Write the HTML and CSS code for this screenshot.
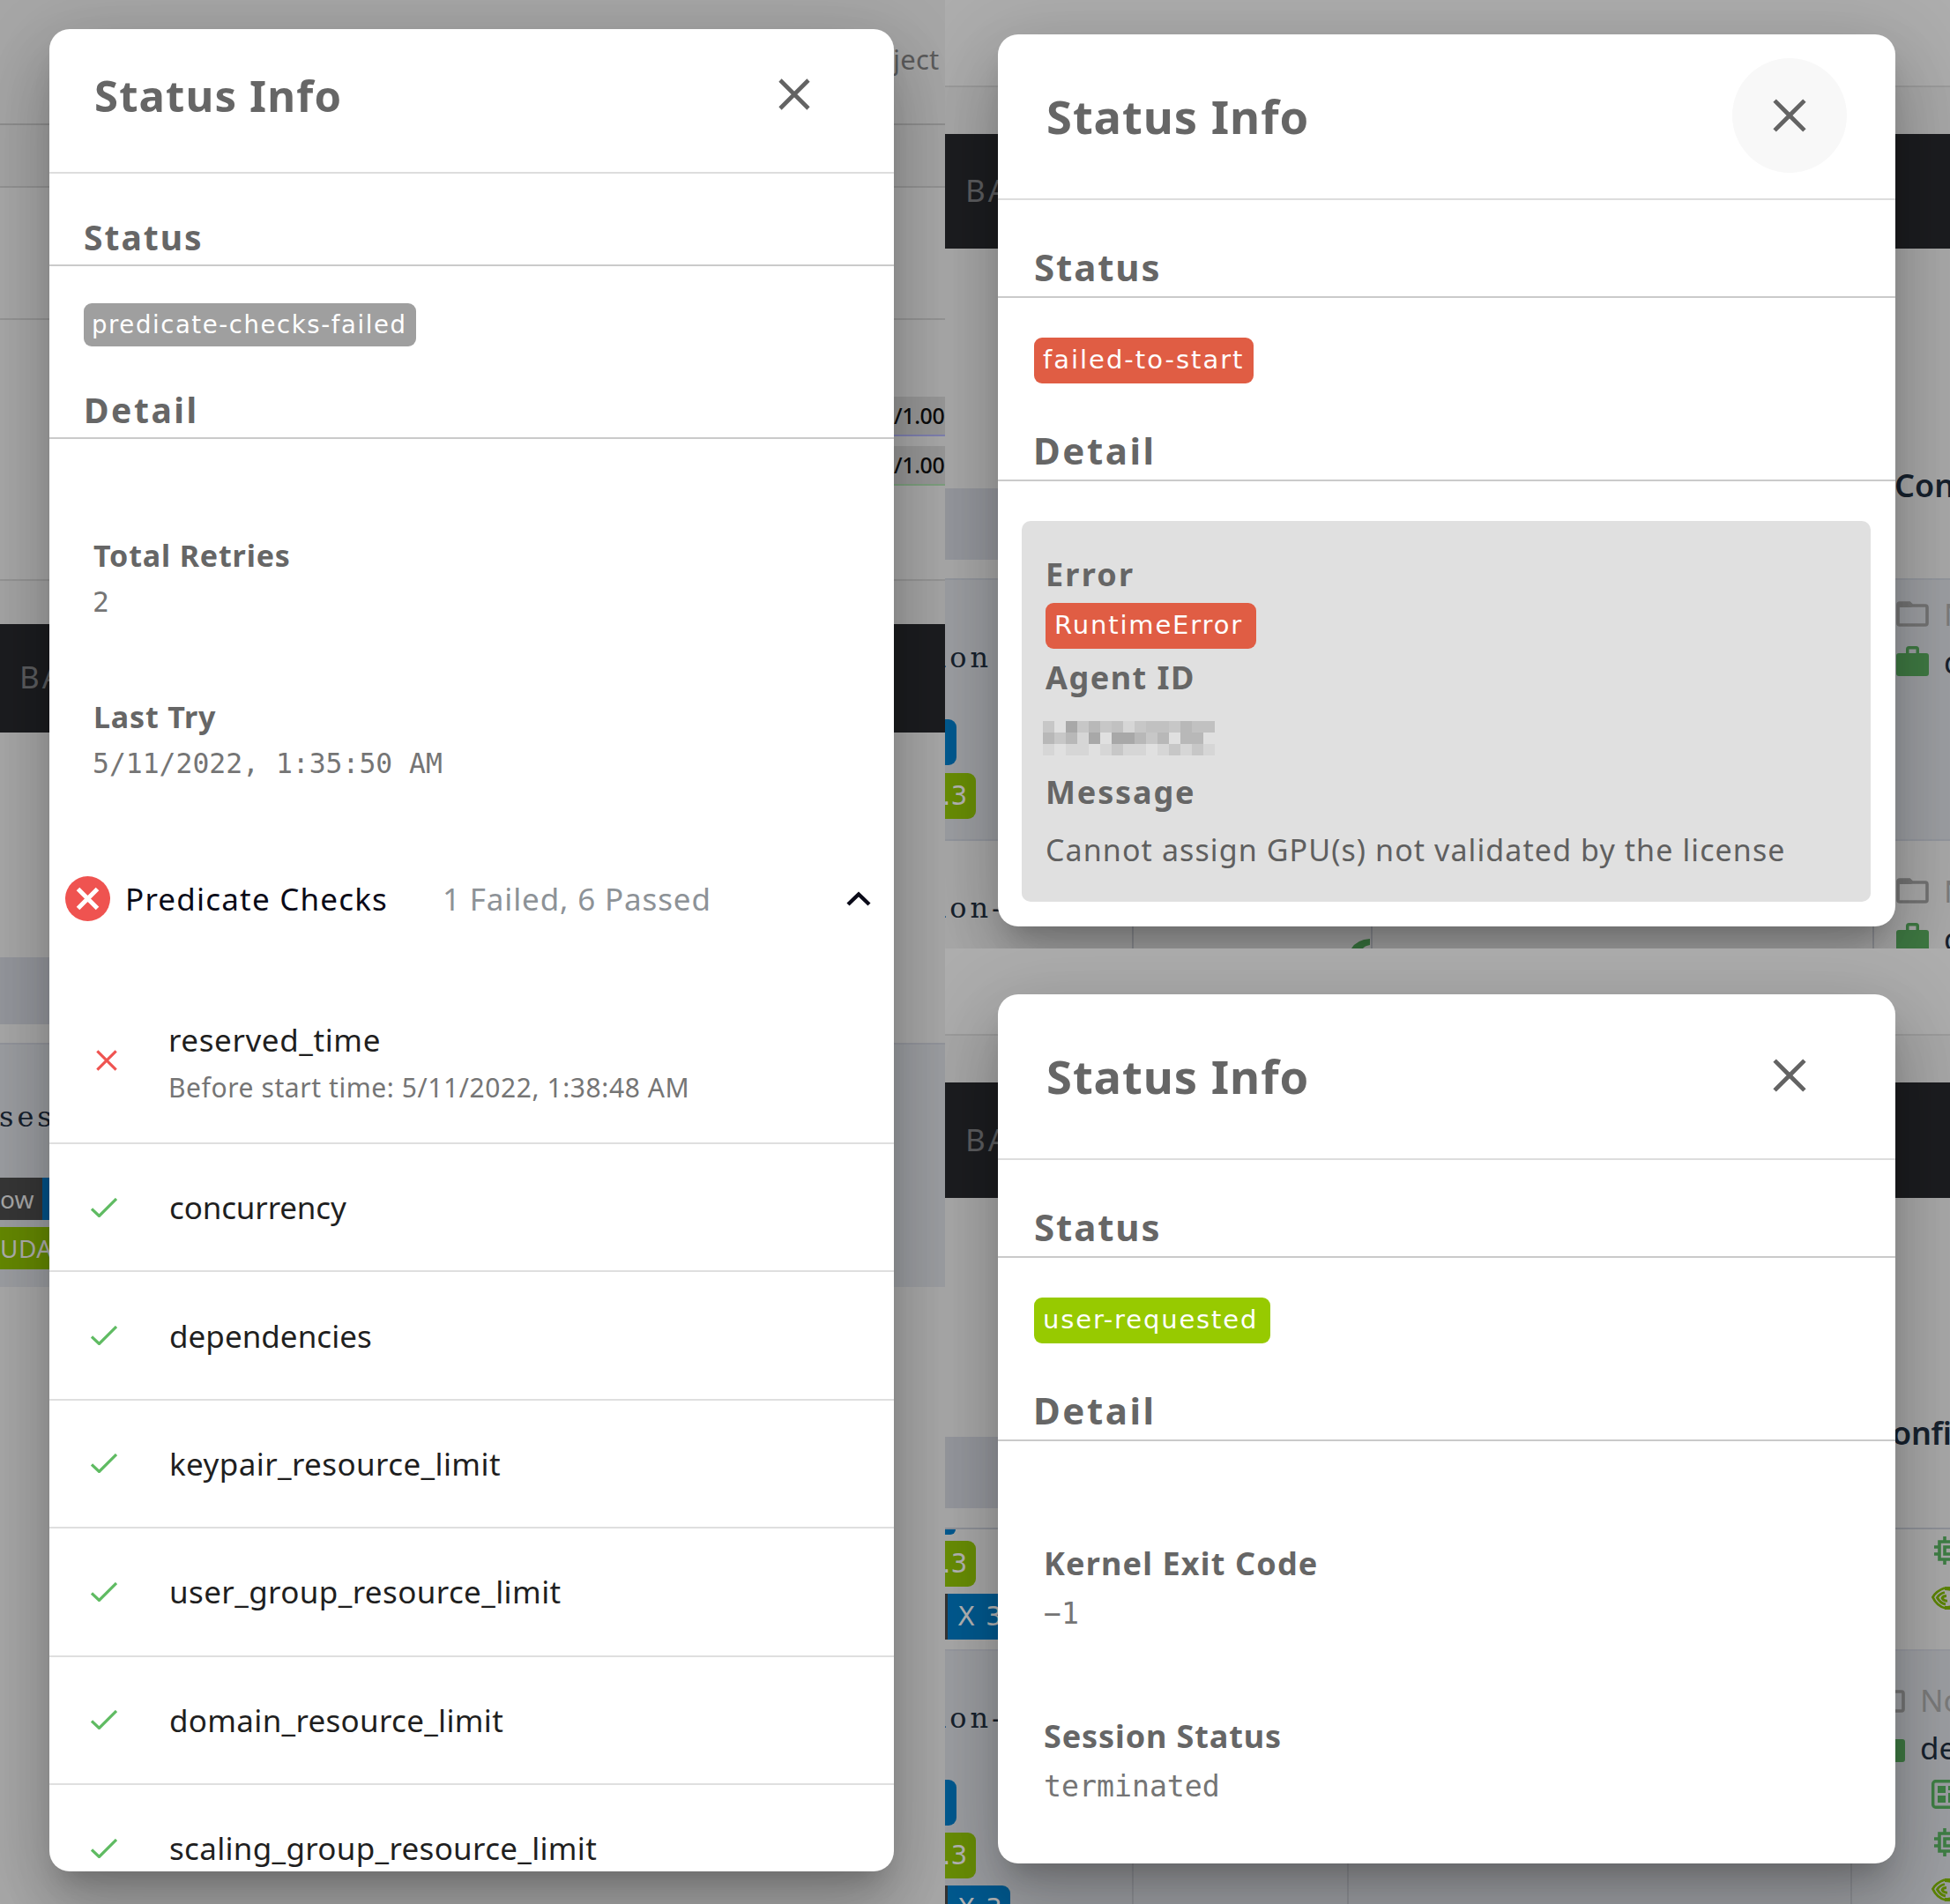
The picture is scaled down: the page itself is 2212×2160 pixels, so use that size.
FILE: index.html
```html
<!DOCTYPE html>
<html lang="en">
<head>
<meta charset="utf-8">
<title>Status Info</title>
<link rel="stylesheet" href="styles.css">
</head>
<body>
<svg class="defs" aria-hidden="true">
  <symbol id="close" viewBox="0 0 36 36"><path d="M2 2 34 34M34 2 2 34" fill="none" stroke="currentColor" stroke-width="4.6"/></symbol>
  <symbol id="check" viewBox="0 0 30 22"><path d="M1 12.500 9.500 20.500 29 1" fill="none" stroke="currentColor" stroke-width="3.200"/></symbol>
  <symbol id="folder" viewBox="0 0 37 29"><path d="M2 4V25q0 2 2 2H33q2 0 2-2V7q0-2-2-2H18L15 2H4Q2 2 2 4Z" fill="none" stroke="currentColor" stroke-width="3.600"/><path d="M1 3h13l4 4H1z" fill="currentColor"/></symbol>
  <symbol id="case" viewBox="0 0 37 34"><path fill-rule="evenodd" d="M11 8V3.500Q11 0 14.500 0H22.500Q26 0 26 3.500V8H34Q37 8 37 11V31Q37 34 34 34H3Q0 34 0 31V11Q0 8 3 8ZM14.500 8H22.500V3.500H14.500Z" fill="currentColor"/></symbol>
  <symbol id="chip" viewBox="0 0 32 32"><path d="M6 6H26V26H6ZM12 12H20V20H12ZM12 0V6M20 0V6M12 26V32M20 26V32M0 12H6M0 20H6M26 12H32M26 20H32" fill="none" stroke="currentColor" stroke-width="3.600"/></symbol>
  <symbol id="board" viewBox="0 0 36 33"><rect x="1.700" y="1.700" width="32.600" height="29.600" rx="3" fill="none" stroke="currentColor" stroke-width="3.400"/><path d="M7 7h9v8H7zM7 18h9v8H7zM19 7h9v5h-9zM19 15h9v11h-9z" fill="currentColor"/></symbol>
  <symbol id="eye" viewBox="0 0 40 26"><path d="M15 1.500Q5 5 1.500 12 6 22 16 24.500M15 6.500Q9 8 6.500 12.500 10 19 16 20M17 10.500Q13 10.500 12 13 14 16.500 18 16" fill="none" stroke="currentColor" stroke-width="2.800"/><path d="M15 0H40V26H15V22Q28 22 32 13 27 4 15 4Z" fill="currentColor"/></symbol>
</svg>

<main class="board">
  <section class="pane pane-tall">
    <div class="bands">
      <div class="band t1"></div><div class="band t2"></div><div class="band t3"></div><div class="band t4"></div>
      <div class="band t5"></div><div class="band bar t6"></div><div class="band t7"></div><div class="band t8"></div><div class="band t9"></div><div class="band t10"></div>
    </div>
    <div class="rail rail-l">
      <span class="brand brand-t">BA</span>
      <div class="head-cell head-t"></div>
      <span class="sess sess-t">ses</span>
      <div class="tag-row"><span class="tag-dark">ow</span><span class="tag-blue"></span></div>
      <span class="tag-uda">UDA</span>
    </div>
    <div class="rail rail-r">
      <span class="proj">ject</span>
      <span class="usage">/1.00</span>
      <span class="usage usage-b">/1.00</span>
    </div>

    <article class="modal modal-t">
      <header class="head">
        <h1 class="title">Status Info</h1>
        <svg class="x"><use href="#close"/></svg>
      </header>
      <h2 class="sub">Status</h2>
      <span class="badge gray">predicate-checks-failed</span>
      <h2 class="sub"><span class="det">Detail</span></h2>
      <div class="facts">
        <h3 class="label">Total Retries</h3>
        <p class="mono">2</p>
        <h3 class="label next">Last Try</h3>
        <p class="mono">5/11/2022, 1:35:50 AM</p>
      </div>
      <div class="checks">
        <svg class="fail" viewBox="0 0 51 51"><circle cx="25.500" cy="25.500" r="25.500" fill="#ef5350"/><path d="M14.500 14.500 36.500 36.500M36.500 14.500 14.500 36.500" stroke="#fff" stroke-width="5"/></svg>
        <span class="checks-name">Predicate Checks</span>
        <span class="checks-sum">1 Failed, 6 Passed</span>
        <svg class="chev" viewBox="0 0 28 17"><path d="M2 15 14 3.500 26 15" fill="none" stroke="#0a0a18" stroke-width="4.400"/></svg>
      </div>
      <ul class="list">
        <li class="item first"><svg class="bad"><use href="#close"/></svg><div><p class="name n1">reserved_time</p><p class="note">Before start time: 5/11/2022, 1:38:48 AM</p></div></li>
        <li class="item"><svg class="ok"><use href="#check"/></svg><p class="name n2">concurrency</p></li>
        <li class="item"><svg class="ok"><use href="#check"/></svg><p class="name n3">dependencies</p></li>
        <li class="item"><svg class="ok"><use href="#check"/></svg><p class="name">keypair_resource_limit</p></li>
        <li class="item"><svg class="ok"><use href="#check"/></svg><p class="name">user_group_resource_limit</p></li>
        <li class="item"><svg class="ok"><use href="#check"/></svg><p class="name n4">domain_resource_limit</p></li>
        <li class="item"><svg class="ok"><use href="#check"/></svg><p class="name n4">scaling_group_resource_limit</p></li>
      </ul>
    </article>
  </section>

  <div class="side">
    <section class="pane pane-top">
      <div class="bands">
        <div class="band r1"></div><div class="band r2"></div><div class="band bar r3"></div><div class="band r4"></div><div class="band r5"></div>
        <div class="band r6 cols"><i class="c1"></i><i class="c2"></i><i class="c3"></i></div>
      </div>
      <div class="rail rail-l">
        <span class="brand brand-a">BA</span>
        <div class="head-cell head-a"></div>
        <span class="sess sess-a">ion</span>
        <span class="pill blue pill-a"></span>
        <span class="pill green">.3</span>
        <span class="sess sess-a2">ion-</span>
      </div>
      <div class="rail rail-r">
        <span class="conf">Con</span>
        <div class="cfg cfg-1"><svg class="folder"><use href="#folder"/></svg><b class="dim">N</b></div>
        <div class="cfg cfg-2"><svg class="case"><use href="#case"/></svg><b>d</b></div>
        <div class="cfg cfg-3"><svg class="folder"><use href="#folder"/></svg><b class="dim">N</b></div>
        <div class="cfg cfg-2"><svg class="case"><use href="#case"/></svg><b>d</b></div>
      </div>
      <svg class="arc" viewBox="0 0 21 11"><path d="M0 11Q6 1 21 0V7Q15 8 13 11Z" fill="#3c7a41"/></svg>
      <article class="modal modal-a">
        <header class="head">
          <h1 class="title">Status Info</h1>
          <span class="round hover"><svg class="x"><use href="#close"/></svg></span>
        </header>
        <h2 class="sub">Status</h2>
        <span class="badge red">failed-to-start</span>
        <h2 class="sub"><span class="det">Detail</span></h2>
        <div class="error">
          <h3 class="label l-err">Error</h3>
          <span class="badge red rt">RuntimeError</span>
          <h3 class="label l-agent">Agent ID</h3>
          <svg class="mosaic" viewBox="0 0 15 3" preserveAspectRatio="none" shape-rendering="crispEdges">
            <g fill="#c7c7c7"><path d="M0 0h1v1H0zM3 0h1v1H3zM8 0h1v1H8zM1 1h1v1H1zM9 1h1v1H9zM6 2h1v1H6zM13 2h1v1h-1zM5 0h1v1H5zM11 0h1v1h-1zM11 2h1v1h-1z"/></g>
            <g fill="#a8a8a8"><path d="M2 0h1v1H2zM4 1h1v1H4zM6 1h2v1H6z"/></g>
            <g fill="#b8b8b8"><path d="M4 0h1v1H4zM12 0h1v1h-1zM0 1h1v1H0zM2 1h1v1H2zM8 1h1v1H8zM10 1h1v1h-1zM12 1h2v1h-2z"/></g>
            <g fill="#c1c1c1"><path d="M6 0h1v1H6zM9 0h2v1H9zM13 0h2v1h-2z"/></g>
            <g fill="#d6d6d6"><path d="M7 0h1v1H7zM3 1h1v1H3zM0 2h1v1H0zM2 2h2v1H2zM5 2h1v1H5zM7 2h2v1H7zM10 2h1v1h-1zM12 2h1v1h-1zM14 2h1v1h-1z"/></g>
          </svg>
          <h3 class="label l-msg">Message</h3>
          <p class="message">Cannot assign GPU(s) not validated by the license</p>
        </div>
      </article>
    </section>

    <section class="pane pane-bot">
      <div class="bands">
        <div class="band r1"></div><div class="band b2"></div><div class="band bar b3"></div><div class="band b4"></div><div class="band b5"></div>
        <div class="band b6 cols"><i class="c1"></i><i class="c4"></i><i class="c5"></i></div>
      </div>
      <div class="rail rail-l">
        <span class="brand brand-b">BA</span>
        <div class="head-cell head-b"></div>
        <span class="nub"></span>
        <span class="pill green pill-b1">.3</span>
        <span class="pill blue wide">X 3</span>
        <span class="sess sess-b">ion-</span>
        <span class="pill blue pill-b2"></span>
        <span class="pill green pill-b3">.3</span>
        <span class="pill blue last">X 3</span>
      </div>
      <div class="rail rail-r">
        <span class="conf conf-b">onfi</span>
        <svg class="chip chip-1"><use href="#chip"/></svg>
        <svg class="eye"><use href="#eye"/></svg>
        <div class="cfg cfg-4"><svg class="folder"><use href="#folder"/></svg><b class="dim">No</b></div>
        <div class="cfg cfg-5"><svg class="case"><use href="#case"/></svg><b>de</b></div>
        <svg class="pcb"><use href="#board"/></svg>
        <svg class="chip"><use href="#chip"/></svg>
        <svg class="eye"><use href="#eye"/></svg>
      </div>
      <article class="modal modal-b">
        <header class="head">
          <h1 class="title">Status Info</h1>
          <span class="round"><svg class="x"><use href="#close"/></svg></span>
        </header>
        <h2 class="sub">Status</h2>
        <span class="badge lime">user-requested</span>
        <h2 class="sub"><span class="det">Detail</span></h2>
        <div class="facts">
          <h3 class="label kern">Kernel Exit Code</h3>
          <p class="mono">−1</p>
          <h3 class="label next">Session Status</h3>
          <p class="mono">terminated</p>
        </div>
      </article>
    </section>
  </div>
</main>
</body>
</html>
```
FILE: styles.css
```css
* { box-sizing: border-box; margin: 0; padding: 0; }
body {
  width: 2212px; height: 2160px; overflow: hidden;
  font-family: "Noto Sans", "Open Sans", sans-serif;
  line-height: 1; background: #a9a9a9; white-space: nowrap;
}
.defs { display: none; }
svg { display: block; flex: none; }
h1, h2, h3 { font-weight: 700; color: #666; line-height: 1; }

.board { display: grid; grid-template-columns: 1072px 1140px; height: 2160px; }
.side { display: grid; grid-template-rows: 1076px 1084px; }
/* page fragments, rails and the dialog share one grid cell */
.pane { display: grid; grid-template: 100% / 100%; overflow: hidden; }
.pane > * { grid-area: 1 / 1; }

/* dimmed page behind the dialogs */
.bands { display: flex; flex-direction: column; }
.band { flex: none; background: #a9a9a9; }
.bar { background: #1c1d20; }
.t1 { height: 142px; border-bottom: 2px solid #8f8f8f; background: #a7a7a7; }
.t2 { height: 71px; background: #a5a5a5; border-bottom: 2px solid #949494; }
.t3 { height: 150px; border-bottom: 2px solid #969696; }
.t4 { height: 296px; border-bottom: 2px solid #969696; }
.t5 { height: 49px; background: #a6a6a6; }
.t6 { height: 123px; }
.t7 { height: 352px; }
.t8 { height: 2px; background: #94969d; }
.t9 { height: 275px; background: #9d9fa3; }
.t10 { height: 700px; background: #a9a9a9; }
.r1 { height: 99px; border-bottom: 2px solid #9c9c9c; background: #adadad; }
.r2 { height: 53px; background: #a8a8a8; }
.r3 { height: 130px; }
.r4 { height: 376px; border-bottom: 2px solid #94979e; }
.r5 { height: 296px; background: #9d9fa3; border-bottom: 2px solid #94979e; }
.r6 { height: 122px; }
.b2 { height: 53px; background: #a8a8a8; }
.b3 { height: 131px; }
.b4 { height: 376px; border-bottom: 2px solid #8f9299; }
.b5 { height: 138px; border-bottom: 2px solid #9799a0; }
.b6 { height: 287px; background: #9d9fa3; }
.cols { display: flex; }
.cols i { border-right: 2px solid #8f9196; }
.c1 { width: 214px; } .c2 { width: 271px; } .c3 { width: 569px; }
.c4 { width: 244px; } .c5 { width: 571px; }

.rail { display: flex; flex-direction: column; align-items: flex-start; overflow: hidden; z-index: 1; }
.rail > * { flex: none; }
.brand { font-size: 35px; letter-spacing: 3px; color: #5d5e60; }
.brand-t { margin: 750px 0 0 22px; }
.brand-a { margin: 198px 0 0 23px; }
.brand-b { margin: 199px 0 0 23px; }
.head-cell { width: 60px; background: #96989e; }
.head-t { margin-top: 301px; height: 76px; }
.head-a { margin-top: 321px; height: 81px; }
.head-b { margin-top: 320px; height: 81px; }
.sess { font-family: "DejaVu Serif", "Liberation Serif", serif; font-size: 32px; letter-spacing: 4px; color: #17222e; }
.sess-t { margin: 89px 0 0 -1px; }
.sess-a { margin: 95px 0 0 -9px; }
.sess-a2 { margin: 85px 0 0 -9px; }
.sess-b { margin: 73px 0 0 -9px; }
.tag-row { display: flex; margin-top: 53px; height: 48px; }
.tag-dark { width: 48px; background: #373737; color: #a9a9a9; font-size: 28px; padding-top: 10px; }
.tag-blue { width: 20px; background: #00548a; }
.tag-uda { margin-top: 8px; width: 70px; height: 48px; padding-top: 10px; background: #668a03; color: #b0b0b0; font-size: 28px; letter-spacing: .5px; }
.pill { height: 52px; border-radius: 0 9px 9px 0; color: #b5b5b5; font: 29.500px/1 "DejaVu Sans", sans-serif; padding-top: 12px; }
.blue { background: #005a90; }
.green { background: #698e06; width: 35px; margin-top: 9px; text-indent: -3px; }
.pill-a { width: 13px; margin-top: 54px; }
.nub { width: 12px; height: 6px; margin-top: 24px; background: #005a90; border-radius: 0 0 12px 0; }
.pill-b1 { margin-top: 7px; }
.wide { width: 80px; margin-top: 8px; padding-left: 11px; border-left: 3px solid #333; letter-spacing: 1.200px; }
.pill-b2 { width: 13px; margin-top: 54px; }
.pill-b3 { margin-top: 8px; }
.last { width: 74px; margin-top: 8px; padding-left: 11px; border-left: 3px solid #333; letter-spacing: 1.200px; }

.pane-tall .rail-r { margin-left: 1013px; }
.proj { margin-top: 52px; font-size: 31px; letter-spacing: .2px; color: #5c5c5c; }
.usage { width: 59px; height: 45px; margin-top: 367px; padding: 9px 0 0 1px; background: #989898; border-bottom: 2px solid #7f81b0; color: #0c0c0c; font-size: 25px; font-weight: 500; letter-spacing: -.4px; }
.usage-b { margin-top: 11px; border-color: #7ea07f; }
.side .rail-r { margin-left: 1077px; }
.conf { font-size: 36px; font-weight: 600; color: #17222e; margin-top: 533px; }
.conf-b { margin: 532px 0 0 -3px; letter-spacing: -.3px; }
.cfg { display: flex; align-items: center; height: 34px; margin-left: 2px; gap: 17px; color: #3f7a43; }
.cfg b { font-size: 35px; font-weight: 400; color: #17222e; }
.cfg b.dim { color: #7b7b7b; }
.cfg-1 { margin-top: 110px; } .cfg-2 { margin-top: 20px; } .cfg-3 { margin-top: 226px; }
.cfg-4 { margin: 85px 0 0 -25px; } .cfg-5 { margin: 20px 0 0 -25px; }
.folder { width: 37px; height: 29px; color: #747474; }
.case { width: 37px; height: 34px; color: #3f7a43; }
.chip { width: 32px; height: 32px; margin: 22px 0 0 45px; color: #3f7f45; }
.chip-1 { margin-top: 99px; }
.eye { width: 40px; height: 26px; margin: 25px 0 0 42px; color: #5c8400; }
.pcb { width: 36px; height: 33px; margin: 20px 0 0 42px; color: #3f7f45; }
.arc { width: 21px; height: 11px; margin: 1065px 0 0 461px; z-index: 1; }

/* dialogs */
.modal {
  background: #fff; border-radius: 23px; overflow: hidden; z-index: 2;
  display: flex; flex-direction: column; align-items: stretch;
  box-shadow: 0 22px 30px -14px rgba(0,0,0,.2), 0 48px 76px 6px rgba(0,0,0,.14), 0 18px 92px 16px rgba(0,0,0,.12);
}
.modal > * { flex: none; }
.modal-t { margin: 33px 0 0 56px; width: 958px; height: 2090px; }
.modal-a { margin: 39px 0 0 60px; width: 1018px; height: 1012px; }
.modal-b { margin: 52px 0 0 60px; width: 1018px; height: 986px; }

.head { display: flex; justify-content: space-between; border-bottom: 2px solid #ddd; height: 188px; padding: 0 55px 0 55px; }
.title { font-size: 52.500px; letter-spacing: .950px; margin-top: 67px; }
.x { width: 38px; height: 38px; color: #636363; }
.round { width: 130px; height: 130px; margin-top: 27px; border-radius: 50%; display: grid; place-items: center; }
.hover { background: #f8f8f8; }
.sub { height: 111px; padding: 55px 0 0 41px; border-bottom: 2px solid #cacaca; font-size: 42px; letter-spacing: 1.900px; }
.det { letter-spacing: 2.550px; margin-left: -1px; }
.badge { align-self: flex-start; margin: 45px 0 0 41px; height: 52px; padding: 11px 10px 0; border-radius: 9px; color: #fff; font: 29px/1 "DejaVu Sans", sans-serif; letter-spacing: 2px; }
.red { background: #e05d44; width: 249px; }
.lime { background: #97ca00; width: 268px; letter-spacing: 1.850px; }
.gray { background: #9f9f9f; }

.modal-t .head { height: 164px; padding: 0 95px 0 51px; }
.modal-t .title { font-size: 49px; letter-spacing: 1.150px; margin-top: 51px; }
.modal-t .x { width: 36px; height: 36px; margin-top: 56px; }
.modal-t .sub { height: 105px; padding: 52px 0 0 39px; font-size: 39px; letter-spacing: 2px; }
.modal-t .det { letter-spacing: 2.550px; margin-left: 0; }
.modal-t .badge { margin: 42px 0 0 39px; width: 377px; height: 49px; padding: 11px 9px 0; font-size: 27.500px; letter-spacing: 1.600px; }

.facts { padding: 121px 0 0 52px; }
.label { font-size: 36px; letter-spacing: .880px; }
.kern { letter-spacing: 1.150px; }
.mono { font-family: "DejaVu Sans Mono", monospace; font-size: 33.200px; color: #757575; margin: 22px 0 0 0; }
.next { margin-top: 105px; }
.modal-t .facts { padding: 115px 0 0 50px; height: 384px; }
.modal-t .label { font-size: 34px; letter-spacing: .850px; }
.modal-t .mono { font-size: 31.400px; margin: 21px 0 0 -1px; }
.modal-t .next { margin-top: 97px; }

.checks { display: flex; align-items: center; height: 51px; margin-top: 112px; padding-left: 18px; font-size: 35px; }
.fail { width: 51px; height: 51px; }
.checks-name { margin-left: 17px; width: 360px; letter-spacing: 1.200px; color: #0a0a18; }
.checks-sum { width: 458px; letter-spacing: .850px; color: #8d9297; }
.chev { width: 28px; height: 17px; }
.list { list-style: none; }
.item { display: flex; align-items: center; height: 145.400px; border-bottom: 2px solid #dfdfdf; padding-left: 47px; color: #1f1f1f; }
.first { height: 253px; align-items: flex-start; padding: 117px 0 0 54px; }
.ok { width: 30px; height: 22px; margin-right: 59px; color: #5fbb62; }
.bad { width: 24px; height: 24px; margin: 29px 58px 0 -1px; color: #ef5350; }
.name { font-size: 35px; letter-spacing: .400px; }
.n1 { letter-spacing: .600px; } .n2 { letter-spacing: -.140px; } .n3 { letter-spacing: .030px; } .n4 { letter-spacing: .310px; }
.note { margin-top: 22px; font-size: 30px; letter-spacing: .580px; color: #757575; }

.error { margin: 45px 28px 0 27px; height: 432px; border-radius: 10px; background: #e0e0e0; padding: 43px 0 0 27px; }
.l-err { letter-spacing: 2.200px; }
.badge.rt { display: block; width: 239px; margin: 14px 0 0 0; letter-spacing: 1.850px; }
.l-agent { margin-top: 15px; letter-spacing: 1.500px; }
.mosaic { width: 195px; height: 39px; margin: 31px 0 0 -3px; }
.l-msg { margin-top: 24px; letter-spacing: 1.850px; }
.message { margin-top: 30px; font-size: 34px; letter-spacing: 1.090px; color: #5f5f5f; }
```
